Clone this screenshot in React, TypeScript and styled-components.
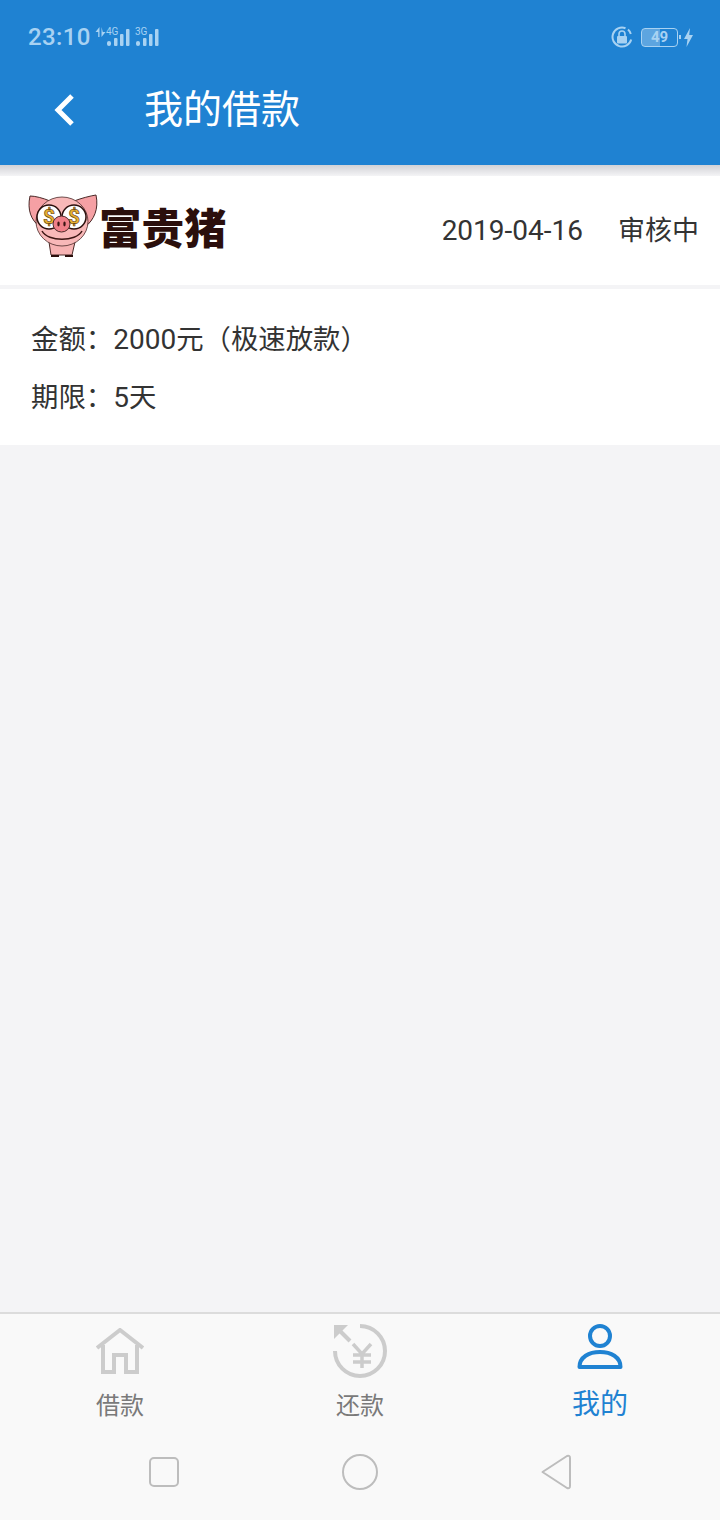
import React from 'react';
import styled, { createGlobalStyle } from 'styled-components';

const BLUE = '#1f82d2';
const STATUS = '#a8d2f2';
const FONT = 'Roboto, "Noto Sans CJK SC", sans-serif';

const GlobalStyle = createGlobalStyle`
    html, body {
        margin: 0;
        padding: 0;
        background: #f4f4f6;
    }
    body {
        font-family: ${FONT};
    }
`;

const Page = styled.div`
    width: 720px;
    height: 1520px;
    display: flex;
    flex-direction: column;
    background: #f4f4f6;
    overflow: hidden;
`;

const Header = styled.header`
    height: 165px;
    flex: none;
    background: ${BLUE};
    display: flex;
    flex-direction: column;
`;

const StatusBar = styled.div`
    height: 74px;
    flex: none;
    display: flex;
    align-items: center;
    padding: 0 27px 0 28px;
    color: ${STATUS};
`;

const Clock = styled.span`
    font-size: 24px;
    font-weight: 500;
    letter-spacing: 0.4px;
    margin-right: 4px;
`;

const SignalGap = styled.span`
    width: 5px;
`;

const StatusRight = styled.div`
    margin-left: auto;
    display: flex;
    align-items: center;
`;

const Battery = styled.div`
    width: 37px;
    height: 19px;
    margin-left: 8px;
    box-sizing: border-box;
    border: 1.5px solid ${STATUS};
    border-radius: 4px;
    display: flex;
    align-items: center;
    justify-content: center;
    font-size: 15px;
    font-weight: 700;
    overflow: hidden;
    background: linear-gradient(to right, #5da5e0 0 50%, transparent 50%);
    color: ${STATUS};
`;

const TitleRow = styled.div`
    flex: 1;
    display: flex;
    align-items: center;
    padding: 0 0 19px 54px;
`;

const Title = styled.h1`
    margin: 0 0 0 70px;
    font-size: 39px;
    font-weight: 400;
    line-height: 46px;
    color: #fff;
`;

const HeaderShadow = styled.div`
    height: 11px;
    flex: none;
    background: linear-gradient(to bottom, #d2d2d6, #f4f4f6);
`;

const LogoRow = styled.section`
    height: 109px;
    flex: none;
    background: #fff;
    display: flex;
    align-items: center;
    padding: 0 21px 0 28px;
    margin-bottom: 4px;
`;

const Brand = styled.div`
    display: flex;
    align-items: center;
    margin-bottom: 9px;
`;

const BrandName = styled.span`
    margin-left: 1px;
    font-family: "Noto Sans CJK SC", sans-serif;
    font-size: 42.5px;
    font-weight: 900;
    line-height: 50px;
    color: #2b0f0c;
`;

const LoanMeta = styled.div`
    margin-left: auto;
    margin-top: 1px;
    display: flex;
    align-items: center;
    gap: 35px;
    font-size: 27px;
    line-height: 36px;
    color: #333;
`;

const Num = styled.span`
    font-size: 28px;
`;

const Details = styled.section`
    height: 156px;
    flex: none;
    box-sizing: border-box;
    padding-top: 22px;
    background: #fff;
`;

const DetailLine = styled.div`
    height: 58px;
    line-height: 58px;
    padding-left: 31px;
    font-size: 27.4px;
    color: #333;
`;

const Spacer = styled.div`
    flex: 1;
`;

const BottomBar = styled.footer`
    height: 208px;
    flex: none;
    box-sizing: border-box;
    background: #f9f9f9;
    border-top: 2px solid #dcdcdc;
    display: flex;
    flex-direction: column;
`;

const Tabs = styled.nav`
    display: grid;
    grid-template-columns: repeat(3, 240px);
`;

const Tab = styled.div`
    display: flex;
    flex-direction: column;
    align-items: center;
`;

const TabIcon = styled.div<{ $top: number }>`
    height: 60px;
    padding-top: ${p => p.$top}px;
    box-sizing: border-box;
    display: flex;
    align-items: flex-start;
`;

const TabLabel = styled.span<{ $active?: boolean }>`
    margin-top: ${p => (p.$active ? '13px' : '14px')};
    line-height: 36px;
    font-size: ${p => (p.$active ? '28px' : '24px')};
    color: ${p => (p.$active ? BLUE : '#7a7a7a')};
`;

const SystemNav = styled.div`
    display: grid;
    grid-template-columns: repeat(3, 196px);
    justify-content: center;
    justify-items: center;
    align-items: center;
    margin-top: 20px;
    height: 56px;
`;

const NetworkIcon = ({ label }: { label: string }) => (
    <svg width="24" height="22" viewBox="0 0 24 22">
        <text x="0" y="9" fontSize="10" fontFamily="Roboto, sans-serif" fill={STATUS}>{label}</text>
        <rect x="1" y="15" width="4" height="5" rx="2" fill={STATUS} />
        <rect x="8" y="12" width="3.5" height="8" rx="1" fill={STATUS} />
        <rect x="14" y="8" width="3.5" height="12" rx="1" fill={STATUS} />
        <rect x="20" y="3" width="3.5" height="17" rx="1" fill={STATUS} />
    </svg>
);

const DataArrows = () => (
    <svg width="11" height="12" viewBox="0 0 11 12" style={{ marginBottom: 8 }}>
        <path d="M4.5 0 L0.5 5 H3.2 V10 H4.5 Z M6.5 0 V10 L10.5 5 H7.8 Z" fill={STATUS} />
    </svg>
);

const LockRotate = () => (
    <svg width="22" height="22" viewBox="0 0 22 22" fill="none">
        <path d="M14.5 2.2 A9.5 9.5 0 1 0 20.2 13.5" stroke={STATUS} strokeWidth="2" />
        <path d="M19.8 8 A9.5 9.5 0 0 0 17 3.6" stroke={STATUS} strokeWidth="2" />
        <rect x="6" y="10" width="10" height="7.5" rx="1" fill={STATUS} />
        <path d="M8 10 V8 A3 3 0 0 1 14 8 V10" stroke={STATUS} strokeWidth="1.6" />
    </svg>
);

const BatteryTip = () => (
    <svg width="5" height="8" viewBox="0 0 5 8" style={{ marginLeft: 1 }}>
        <rect x="0" y="2" width="2" height="4" fill={STATUS} />
    </svg>
);

const Bolt = () => (
    <svg width="9" height="19" viewBox="0 0 9 19">
        <path d="M6 0 L0 11 H3.5 L2.5 19 L9 7 H5.2 Z" fill={STATUS} />
    </svg>
);

const BackIcon = () => (
    <svg width="20" height="32" viewBox="0 0 20 32" fill="none">
        <path d="M18 2 L4 16 L18 30" stroke="#fff" strokeWidth="5" />
    </svg>
);

const PigLogo = () => (
    <svg width="70" height="64" viewBox="0 0 70 64" strokeLinejoin="round">
        <path d="M22 7 C15 4 7 2 2 2 C-1 16 3 26 12 33 Z" fill="#f5a0a4" stroke="#4a2a28" strokeWidth="1" />
        <path d="M46 7 C54 4 62 2 68 1 C71 15 66 26 57 33 Z" fill="#f5a0a4" stroke="#4a2a28" strokeWidth="1" />
        <path d="M21 48 L23 61 H44 L47 48 Z" fill="#f7b3b3" stroke="#4a2a28" strokeWidth="1" />
        <path d="M23 62 H31 M37 62 H45" stroke="#2b0f0c" strokeWidth="2" />
        <ellipse cx="34" cy="27.5" rx="26" ry="24.5" fill="#f8b8b8" stroke="#4a2a28" strokeWidth="0.8" />
        <circle cx="21" cy="23" r="12" fill="#fff" stroke="#2b0f0c" strokeWidth="1.5" />
        <circle cx="46" cy="23" r="12" fill="#fff" stroke="#2b0f0c" strokeWidth="1.5" />
        <text x="21" y="30" textAnchor="middle" fontSize="21" fontWeight="700" fontFamily="Roboto, sans-serif" fill="#eab02e" stroke="#5b3a10" strokeWidth="0.6">$</text>
        <text x="46" y="30" textAnchor="middle" fontSize="21" fontWeight="700" fontFamily="Roboto, sans-serif" fill="#eab02e" stroke="#5b3a10" strokeWidth="0.6">$</text>
        <ellipse cx="33.5" cy="30" rx="8.5" ry="8" fill="#ef7f88" stroke="#4a2a28" strokeWidth="1" />
        <ellipse cx="30.5" cy="30" rx="1.2" ry="2.4" fill="#3b1512" />
        <ellipse cx="36.5" cy="30" rx="1.2" ry="2.4" fill="#3b1512" />
        <path d="M14 37 C20 48 48 48 54 37" fill="none" stroke="#3b1512" strokeWidth="1.5" />
    </svg>
);

const HomeIcon = () => (
    <svg width="48" height="46" viewBox="0 0 48 46" fill="none" stroke="#cccccc" strokeWidth="4">
        <path d="M1 20 L24 2 L47 20" />
        <path d="M7 17 V44 H18 V27 H30 V44 H41 V17" />
    </svg>
);

const RepayIcon = () => (
    <svg width="54" height="56" viewBox="0 0 54 56" fill="none" stroke="#cccccc">
        <path d="M27 3 A25 25 0 1 1 2 28" strokeWidth="4" />
        <path d="M1 2 H15 L1 16 Z" fill="#cccccc" stroke="none" />
        <path d="M6 7 L17 18" strokeWidth="4" />
        <path d="M20 21 L29 31 L38 21 M20 32 H38 M20 39 H38 M29 31 V45" strokeWidth="3.5" />
    </svg>
);

const UserIcon = () => (
    <svg width="46" height="46" viewBox="0 0 46 46" fill="none" stroke={BLUE} strokeWidth="4" strokeLinejoin="round">
        <circle cx="23" cy="12" r="10" />
        <path d="M2.5 43 C2.5 33 12 28 23 28 C34 28 43.5 33 43.5 43 Z" />
    </svg>
);

const NavSquare = () => (
    <svg width="30" height="30" viewBox="0 0 30 30" fill="none">
        <rect x="1" y="1" width="28" height="28" rx="4" stroke="#bdbdbd" strokeWidth="2" />
    </svg>
);

const NavCircle = () => (
    <svg width="36" height="36" viewBox="0 0 36 36" fill="none">
        <circle cx="18" cy="18" r="17" stroke="#bdbdbd" strokeWidth="2" />
    </svg>
);

const NavBack = () => (
    <svg width="32" height="36" viewBox="0 0 32 36" fill="none">
        <path d="M2.5 18 L27 2 Q30 1 30 4 V32 Q30 35 27 34 Z" stroke="#bdbdbd" strokeWidth="2" strokeLinejoin="round" />
    </svg>
);

const App = () => {
    return (
        <Page>
            <GlobalStyle />
            <Header>
                <StatusBar>
                    <Clock>23:10</Clock>
                    <DataArrows />
                    <NetworkIcon label="4G" />
                    <SignalGap />
                    <NetworkIcon label="3G" />
                    <StatusRight>
                        <LockRotate />
                        <Battery>49</Battery>
                        <BatteryTip />
                        <Bolt />
                    </StatusRight>
                </StatusBar>
                <TitleRow>
                    <BackIcon />
                    <Title>我的借款</Title>
                </TitleRow>
            </Header>
            <HeaderShadow />
            <LogoRow>
                <Brand>
                    <PigLogo />
                    <BrandName>富贵猪</BrandName>
                </Brand>
                <LoanMeta>
                    <Num>2019-04-16</Num>
                    <span>审核中</span>
                </LoanMeta>
            </LogoRow>
            <Details>
                <DetailLine>金额：<Num>2000</Num>元（极速放款）</DetailLine>
                <DetailLine>期限：<Num>5</Num>天</DetailLine>
            </Details>
            <Spacer />
            <BottomBar>
                <Tabs>
                    <Tab>
                        <TabIcon $top={14}><HomeIcon /></TabIcon>
                        <TabLabel>借款</TabLabel>
                    </Tab>
                    <Tab>
                        <TabIcon $top={9}><RepayIcon /></TabIcon>
                        <TabLabel>还款</TabLabel>
                    </Tab>
                    <Tab>
                        <TabIcon $top={10}><UserIcon /></TabIcon>
                        <TabLabel $active>我的</TabLabel>
                    </Tab>
                </Tabs>
                <SystemNav>
                    <NavSquare />
                    <NavCircle />
                    <NavBack />
                </SystemNav>
            </BottomBar>
        </Page>
    );
};

export default App;
